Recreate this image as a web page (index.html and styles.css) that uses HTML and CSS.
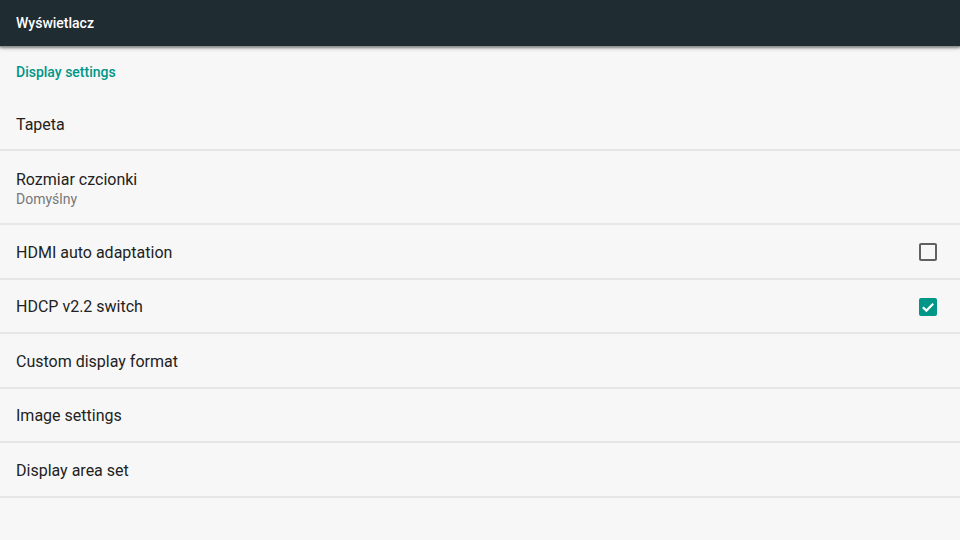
FILE: index.html
```html
<!DOCTYPE html>
<html lang="pl">
<head>
<meta charset="utf-8">
<title>Wyświetlacz</title>
<link rel="stylesheet" href="styles.css">
</head>
<body>
<header class="appbar"><h1 class="appbar-title">Wyświetlacz</h1></header>
<main class="prefs">
  <div class="category">Display settings</div>
  <div class="row row-tall1"><span class="title">Tapeta</span></div>
  <div class="row row-two"><span class="title">Rozmiar czcionki</span><span class="summary">Domyślny</span></div>
  <div class="row"><span class="title">HDMI auto adaptation</span><span class="checkbox"></span></div>
  <div class="row"><span class="title">HDCP v2.2 switch</span><span class="checkbox checked"><svg viewBox="0 0 18 18" width="18" height="18"><path d="M3.8 9.2 L7.4 12.6 L14.2 5.8" fill="none" stroke="#fff" stroke-width="2.2"/></svg></span></div>
  <div class="row"><span class="title">Custom display format</span></div>
  <div class="row"><span class="title">Image settings</span></div>
  <div class="row"><span class="title">Display area set</span></div>
</main>
</body>
</html>
```
FILE: styles.css
```css
html, body { margin: 0; padding: 0; }
body {
  width: 960px; height: 540px; overflow: hidden;
  background: #f7f7f7;
  font-family: Roboto, "Noto Sans", sans-serif;
}
.appbar {
  height: 46px;
  background: #1f2c32;
  display: flex; align-items: center;
  padding: 0 16px;
  box-shadow: 0 1px 0 #8c9391, 0 2px 2px rgba(0,0,0,0.35), 0 3px 4px rgba(0,0,0,0.15);
  position: relative; z-index: 1;
}
.appbar-title {
  margin: 0; font-size: 14px; font-weight: 500; color: #fff;
}
.prefs { display: flex; flex-direction: column; }
.category {
  height: 51px; box-sizing: border-box;
  display: flex; align-items: center;
  padding: 0 16px;
  color: #009688; font-size: 14px; font-weight: 500;
}
.row {
  box-sizing: border-box;
  height: 54.5px;
  border-bottom: 2px solid #e6e6e6;
  display: flex; align-items: center; justify-content: space-between;
  padding: 2px 23px 0 16px;
  position: relative;
}
.row-tall1 { height: 54px; }
.row-two {
  height: 74px;
  flex-direction: column; align-items: flex-start; justify-content: center;
}
.title { font-size: 16px; color: #222; }
.summary { font-size: 14px; color: #777; margin-top: 2px; }
.checkbox {
  width: 18px; height: 18px; box-sizing: border-box;
  border: 2px solid #616161; border-radius: 2px;
  display: flex; align-items: center; justify-content: center;
}
.checkbox.checked { background: #009688; border-color: #009688; }
.checkbox.checked svg { flex: none; }
```
